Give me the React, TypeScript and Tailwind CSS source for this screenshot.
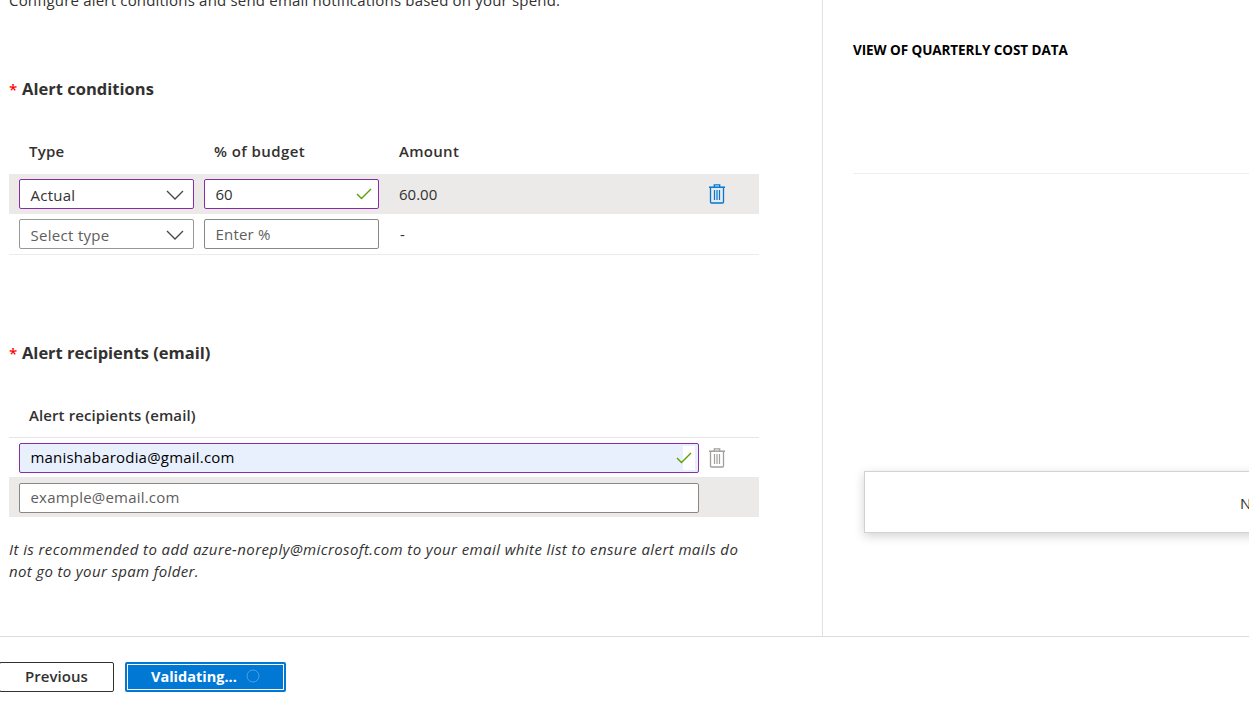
import React from 'react';

function Chevron() {
  return (
    <svg width="18" height="10" viewBox="0 0 18 10" fill="none" stroke="#484644" strokeWidth="1.3" className="mt-[2px] shrink-0">
      <path d="M1 1 L9 9 L17 1" />
    </svg>
  );
}

function Check() {
  return (
    <svg width="16" height="12" viewBox="0 0 16 12" fill="none" stroke="#57a300" strokeWidth="1.4" className="shrink-0">
      <path d="M1 6 L5.5 10.5 L15 1" />
    </svg>
  );
}

function Trash({ className }: { className: string }) {
  return (
    <svg width="18" height="22" viewBox="0 0 18 22" fill="none" stroke="currentColor" className={className}>
      <path d="M1 4.2 H17" strokeWidth="1.5" />
      <path d="M6.3 4 V1.8 H11.7 V4" strokeWidth="1.3" />
      <path d="M2.5 4.5 V19 Q2.5 20 3.5 20 H14.5 Q15.5 20 15.5 19 V4.5" strokeWidth="1.3" />
      <path d="M6.5 7 V17 M9 7 V17 M11.5 7 V17" strokeWidth="1.2" />
    </svg>
  );
}

const field = 'flex h-[30px] items-center rounded-[2px] border bg-white pl-[10.5px]';

export default function App() {
  return (
    <div className="flex h-[719px] w-[1249px] flex-col overflow-hidden bg-white font-['Open_Sans','Noto_Sans',sans-serif] text-[15px] whitespace-nowrap text-[#323130]">
      <div className="flex h-[637px] border-b border-[#dcdcdc]">
        <section className="w-[823px] shrink-0 border-r border-[#e1e1e1] pl-[9px]">
          <p className="-mt-[11px] h-[22px] leading-[22px] tracking-[0.19px]">Configure alert conditions and send email notifications based on your spend.</p>

          <h2 className="mt-[66px] flex h-[24px] text-[16.5px] leading-[24px] font-bold">
            <span className="w-[13px] text-[15px] font-semibold text-[#f00]">*</span>
            <span className="tracking-[0.02px]">Alert conditions</span>
          </h2>
          <div className="mt-[31px] flex h-[42px] items-start pl-[20px] font-semibold leading-[38px]">
            <span className="w-[185px] tracking-[0.25px]">Type</span>
            <span className="w-[185px] tracking-[0.43px]">% of budget</span>
            <span className="tracking-[0.3px]">Amount</span>
          </div>
          <div className="flex h-[40px] w-[750px] items-center bg-[#ebeae8] px-[10px]">
            <div className={`${field} w-[175px] justify-between border-[#8a2da5] pr-[9px]`}>
              <span className="pt-[2px] tracking-[0.25px]">Actual</span>
              <Chevron />
            </div>
            <div className={`${field} ml-[10px] w-[175px] justify-between border-[#8a2da5] pr-[6px]`}>
              <span>60</span>
              <Check />
            </div>
            <span className="ml-[20px]">60.00</span>
            <Trash className="mr-[23px] ml-auto text-[#0078d4]" />
          </div>
          <div className="flex h-[41px] w-[750px] items-center border-b border-[#edebe9] px-[10px] text-[#605e5c]">
            <div className={`${field} w-[175px] justify-between border-[#9a9896] pr-[9px]`}>
              <span className="pt-[2px] tracking-[0.3px]">Select type</span>
              <Chevron />
            </div>
            <div className={`${field} ml-[10px] w-[175px] border-[#8a8886]`}>
              <span className="tracking-[0.2px]">Enter %</span>
            </div>
            <span className="ml-[21px] text-[#323130]">-</span>
          </div>

          <h2 className="mt-[86px] flex h-[24px] text-[16.5px] leading-[24px] font-bold">
            <span className="w-[13px] text-[15px] font-semibold text-[#f00]">*</span>
            <span className="tracking-[-0.02px]">Alert recipients (email)</span>
          </h2>
          <div className="mt-[31px] flex h-[42px] w-[750px] border-b border-[#e5e5e5] pl-[20px] leading-[38px] font-semibold">
            <span className="tracking-[0.1px]">Alert recipients (email)</span>
          </div>
          <div className="flex h-[39px] w-[750px] items-center px-[10px] pt-[1px]">
            <div className="flex h-[30px] w-[680px] items-center justify-between rounded-[2px] border border-[#8a2da5] bg-[#e8f0fe] bg-[linear-gradient(#fff,#fff)] bg-[length:12px_24px] bg-[position:663px_2px] bg-no-repeat pr-[6px] pl-[10.5px] text-black">
              <span className="pb-[2px] tracking-[0.2px]">manishabarodia@gmail.com</span>
              <Check />
            </div>
            <Trash className="ml-[9px] text-[#a19f9d]" />
          </div>
          <div className="flex h-[40px] w-[750px] items-start bg-[#ebeae8] px-[10px] pt-[6px]">
            <div className={`${field} w-[680px] border-[#8a8886] text-[#605e5c]`}>
              <span className="pb-[2px] tracking-[0.2px]">example@email.com</span>
            </div>
          </div>
          <p className="mt-[21px] leading-[22px] italic">
            <span className="block tracking-[0.41px]">It is recommended to add azure-noreply@microsoft.com to your email white list to ensure alert mails do</span>
            <span className="block tracking-[0.35px]">not go to your spam folder.</span>
          </p>
        </section>

        <section className="min-w-0 flex-1 overflow-hidden pl-[30px]">
          <div className="h-[174px] border-b border-[#eeeeee] pt-[40px]">
            <h3 className="text-[13.5px] leading-[20px] font-bold tracking-[-0.07px] text-black">VIEW OF QUARTERLY COST DATA</h3>
          </div>
          <div className="mt-[297px] ml-[11px] flex h-[62px] w-[780px] items-center border border-[#d2d2d2] pl-[375px] shadow-[0_3px_10px_rgba(0,0,0,0.18)]">
            <span className="pt-[2px]">No data</span>
          </div>
        </section>
      </div>

      <footer className="flex pt-[25px]">
        <button className="-ml-[1px] h-[30px] w-[115px] rounded-[2px] border border-[#323130] pb-[2px] font-semibold tracking-[0.05px]">Previous</button>
        <button className="ml-[11px] flex h-[30px] w-[161px] rounded-[2px] bg-[#0078d4] p-[2px] font-semibold text-white">
          <span className="flex h-[26px] w-full items-center border border-white pl-[23px]">
            <span className="w-[95px] text-left text-[14.5px] font-bold">Validating...</span>
            <svg width="14" height="14" viewBox="0 0 14 14" fill="none" stroke="#4aa3e8" className="mb-[2px]">
              <circle cx="7" cy="7" r="6" />
            </svg>
          </span>
        </button>
      </footer>
    </div>
  );
}
